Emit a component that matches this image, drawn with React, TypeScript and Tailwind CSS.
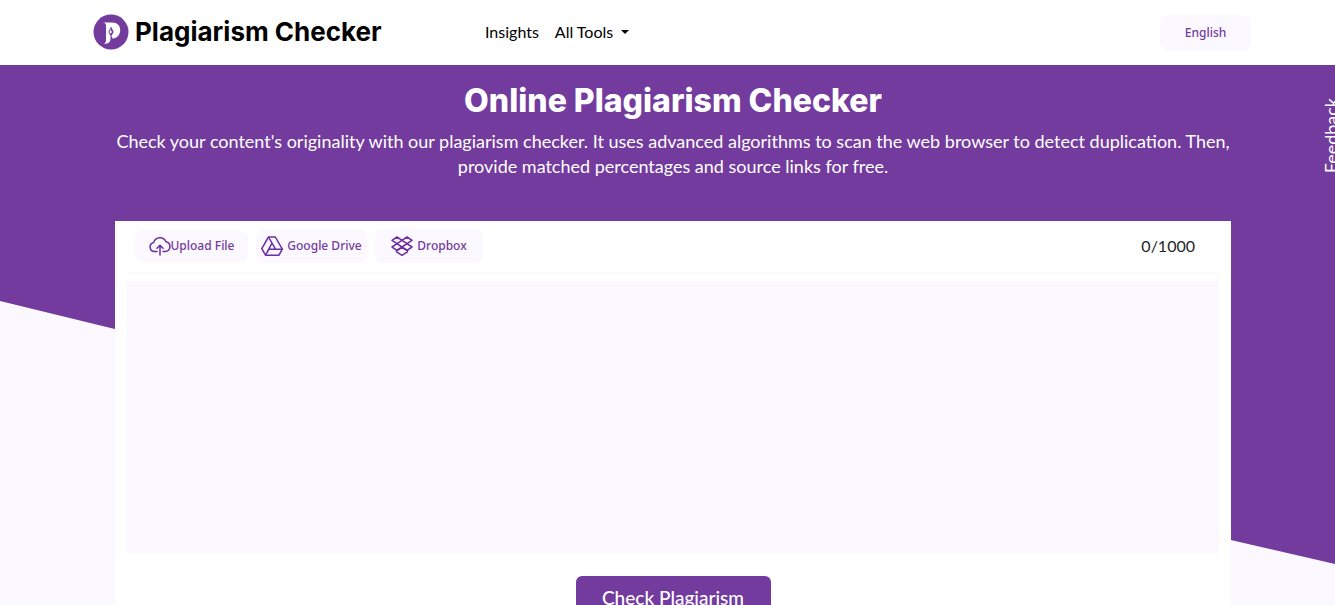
import type { ReactNode } from 'react'

function Logo() {
  return (
    <svg viewBox="0 0 36 36" className="size-9 shrink-0" aria-hidden="true">
      <circle cx="18" cy="18" r="17.5" fill="#733b9e" />
      <path
        fill="#fff"
        d="M10.500 8.500h8.500c5.400 0 8.200 3.200 8.200 7.600 0 4.700-3.200 8.200-7.400 8.600l-1.400-2.700 2.300-4-2.700-5.500-2.700 5.500 2.200 3.800v3c0 3.200-2.200 5.200-6.500 5.200 1.500-1 2-2.300 2-4.200V11.500c0-1.500-.8-2.400-2.500-3z"
      />
      <path fill="#fff" d="M17.600 14.500l.5 2.500a1.200 1.200 0 1 1-1 0z" />
    </svg>
  )
}

function UploadIcon() {
  return (
    <svg viewBox="0 0 22 20" className="h-5 w-[22px]" fill="none" stroke="#6b2fa0" strokeWidth="1.500" strokeLinecap="round" strokeLinejoin="round">
      <path d="M8 15.500H5.500a4.500 4.500 0 0 1-.8-8.900A6.500 6.500 0 0 1 17 5.800a4.900 4.900 0 0 1-.8 9.700H14" />
      <path d="M11 19V9.500M8 12.300l3-3 3 3" />
    </svg>
  )
}

function DriveIcon() {
  return (
    <svg viewBox="0 0 22 20" className="h-5 w-[22px]" fill="none" stroke="#6b2fa0" strokeWidth="1.500" strokeLinejoin="round">
      <path d="M7.500 1h6.800l7 12.200-3.300 6H4.500L.8 12.600z" />
      <path d="M7.500 1l7 12.200h6.800M14.300 13.200H8L4.500 19.200M11 7.200L4.500 19.200" />
    </svg>
  )
}

function DropboxIcon() {
  return (
    <svg viewBox="0 0 22 20" className="h-5 w-[22px]" fill="none" stroke="#6b2fa0" strokeWidth="1.500" strokeLinejoin="round">
      <path d="M6 1l5 3.300-5 3.400-5-3.400zM16 1l5 3.300-5 3.400-5-3.400zM6 7.700l5 3.300-5 3.300L1 11zM16 7.700l5 3.300-5 3.300L11 11z" />
      <path d="M5.500 14.500v1.300l5.500 3.500 5.500-3.500v-1.300L11 11.500z" />
    </svg>
  )
}

function SourceButton({ icon, label, className }: { icon: ReactNode; label: string; className: string }) {
  return (
    <button
      type="button"
      className={`flex items-center justify-center rounded-lg bg-[#fbf8ff] font-['Noto_Sans',sans-serif] text-xs font-medium text-[#733b9e] ${className}`}
    >
      {icon}
      {label}
    </button>
  )
}

function Header() {
  return (
    <header className="flex h-[65px] items-center bg-white pr-[84px] pl-[93px]">
      <a href="#" className="flex w-[392px] items-center gap-1.5 pb-0.5 font-[Inter,sans-serif] text-[26px] font-bold whitespace-nowrap text-black">
        <Logo />
        Plagiarism Checker
      </a>
      <nav className="flex grow items-center gap-4 pb-0.5 text-base text-black">
        <a href="#insights">Insights</a>
        <button type="button" className="flex items-center gap-2">
          All Tools
          <span className="border-x-4 border-t-4 border-x-transparent border-t-black" />
        </button>
      </nav>
      <button
        type="button"
        className="h-9 w-[91px] rounded-lg bg-[#fbf8ff] font-['Noto_Sans',sans-serif] text-xs font-medium text-[#733b9e]"
      >
        English
      </button>
    </header>
  )
}

function Checker() {
  return (
    <section className="bg-white px-3 pb-8">
      <div className="flex h-[52px] items-center gap-2 border-b border-[#fbf8ff] pb-0.5 pl-2">
        <SourceButton icon={<UploadIcon />} label="Upload File" className="h-8 w-[113px]" />
        <SourceButton icon={<DriveIcon />} label="Google Drive" className="h-[34px] w-[111px] gap-1" />
        <SourceButton icon={<DropboxIcon />} label="Dropbox" className="h-[34px] w-[108px] gap-1" />
        <span className="mr-6 ml-auto text-base text-[#212529]">0/1000</span>
      </div>
      <textarea
        aria-label="Text to check"
        className="mt-2 block h-[272px] w-full resize-none bg-[#fbf8ff] p-3 outline-none"
      />
      <button
        type="button"
        className="mx-auto mt-[23px] block h-11 w-[195px] rounded-md bg-[#733b9e] text-[19px] font-medium text-white"
      >
        Check Plagiarism
      </button>
    </section>
  )
}

export default function App() {
  return (
    <div className="relative min-h-screen overflow-hidden bg-[#fbf8ff] font-[Lato,sans-serif]">
      <Header />
      <main className="grid">
        <div className="col-start-1 row-start-1 h-[499px] bg-[#733b9e] [clip-path:polygon(0_0,100%_0,100%_499px,92.2%_475px,8.6%_264px,0_236px)]" />
        <div className="z-10 col-start-1 row-start-1 pr-[104px] pl-[115px]">
          <div className="h-[156px] pt-4 text-center text-white">
            <h1 className="font-[Inter,sans-serif] text-[32px] leading-10 font-extrabold">Online Plagiarism Checker</h1>
            <p className="mt-2 text-lg leading-[25px]">
              Check your content's originality with our plagiarism checker. It uses advanced algorithms to scan the web
              browser to detect duplication. Then, provide matched percentages and source links for free.
            </p>
          </div>
          <Checker />
        </div>
      </main>
      <a href="#feedback" className="absolute top-[98px] -right-1.5 z-20 rotate-180 text-lg leading-5 text-white [writing-mode:vertical-rl]">
        Feedback
      </a>
    </div>
  )
}
